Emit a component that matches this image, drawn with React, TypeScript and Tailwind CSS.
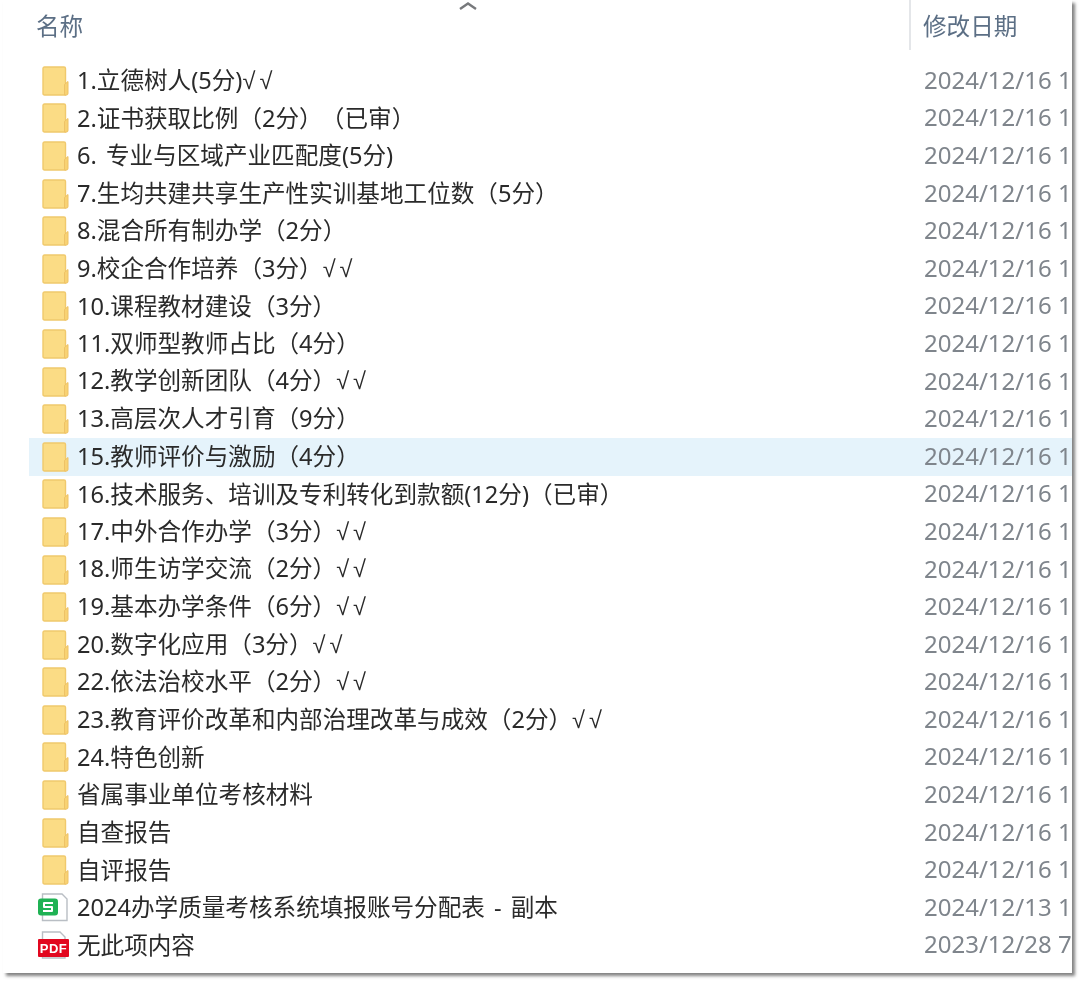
const folders = [
  { name: '1.立德树人(5分)', ticks: true },
  { name: '2.证书获取比例（2分）', note: '（已审）' },
  { name: '6. 专业与区域产业匹配度(5分)' },
  { name: '7.生均共建共享生产性实训基地工位数（5分）' },
  { name: '8.混合所有制办学（2分）' },
  { name: '9.校企合作培养（3分）', ticks: true },
  { name: '10.课程教材建设（3分）' },
  { name: '11.双师型教师占比（4分）' },
  { name: '12.教学创新团队（4分）', ticks: true },
  { name: '13.高层次人才引育（9分）' },
  { name: '15.教师评价与激励（4分）', active: true },
  { name: '16.技术服务、培训及专利转化到款额(12分)（已审）' },
  { name: '17.中外合作办学（3分）', ticks: true },
  { name: '18.师生访学交流（2分）', ticks: true },
  { name: '19.基本办学条件（6分）', ticks: true },
  { name: '20.数字化应用（3分）', ticks: true },
  { name: '22.依法治校水平（2分）', ticks: true },
  { name: '23.教育评价改革和内部治理改革与成效（2分）', ticks: true },
  { name: '24.特色创新' },
  { name: '省属事业单位考核材料' },
  { name: '自查报告' },
  { name: '自评报告' },
];

function FolderIcon() {
  return (
    <svg width="27" height="30" viewBox="0 0 27 30" className="shrink-0">
      <path d="M1 2.5 Q1 1 2.5 1 H22 Q23.5 1 23.5 2.5 V29 H2.5 Q1 29 1 27.5 Z" fill="#fbdc85" stroke="#f0c96c" strokeWidth="1.4" />
      <path d="M23 18 L26 15.5 V27.5 Q26 29 24.5 29 H22.5 V18.5 Z" fill="#f8d273" stroke="#eec266" strokeWidth="1" />
    </svg>
  );
}

function SheetIcon() {
  return (
    <svg width="32" height="30" viewBox="0 0 32 30" className="shrink-0">
      <path d="M5.5 1 H25 L30 6 V27.5 H5.5 Z" fill="#fff" stroke="#b9bec4" strokeWidth="1.4" />
      <rect x="1" y="5.5" width="20" height="17" rx="3" fill="#1fb254" />
      <path d="M16 10 H7 V14 H15 V18 H6" fill="none" stroke="#fff" strokeWidth="2" strokeLinejoin="round" />
    </svg>
  );
}

function PdfIcon() {
  return (
    <svg width="32" height="30" viewBox="0 0 32 30" className="shrink-0">
      <path d="M5.5 2 H23 L28 7 V28 H5.5 Z" fill="#fff" stroke="#b9bec4" strokeWidth="1.4" />
      <rect x="1" y="9" width="31" height="18" rx="1" fill="#e2071f" />
      <text x="16.5" y="22.5" textAnchor="middle" fill="#fff" fontSize="13" fontWeight="700" fontFamily="Liberation Sans, sans-serif" letterSpacing="0.5">PDF</text>
    </svg>
  );
}

function Row({ icon, name, date, active, wide, ticks, note }: { icon: React.ReactNode; name: string; date: string; active?: boolean; wide?: boolean; ticks?: boolean; note?: string }) {
  return (
    <div className={`flex h-[37.6px] items-center ${active ? 'bg-[#e5f3fb]' : ''}`}>
      <div className={`flex w-[882px] items-center gap-[8px] ${wide ? 'pl-[8px]' : 'pl-[13px]'}`}>
        {icon}
        <span className="whitespace-nowrap text-[#2a2a2a] [word-spacing:3px]">
          {name}
          {note && <span className="ml-[10px]">{note}</span>}
          {ticks && <span className="font-['Liberation_Sans'] tracking-[4px]">√√</span>}
        </span>
      </div>
      <div className="overflow-hidden whitespace-nowrap pb-[2px] pl-[13px] text-[24px] text-[#7f858c]">{date}</div>
    </div>
  );
}

export default function App() {
  return (
    <div
      className="h-[983px] w-[1080px] overflow-hidden bg-white pl-[3px] text-[23.6px] blur-[0.45px]"
      style={{ fontFamily: '"Noto Sans", "Noto Sans CJK SC", sans-serif' }}
    >
      <div className="relative flex h-[973px] w-[1069px] flex-col overflow-hidden bg-white shadow-[3px_3px_3px_rgba(90,90,90,0.75)]">
        <svg width="20" height="10" viewBox="0 0 20 10" className="absolute left-[455px] top-[1px]">
          <path d="M2 8 L10 2.5 L18 8" fill="none" stroke="#77797c" strokeWidth="2.4" />
        </svg>
        <div className="flex h-[50px] shrink-0 text-[#5c6f85]">
          <div className="w-[906px] pl-[33px] pt-[11px] leading-[30px]">名称</div>
          <div className="flex-1 border-l-2 border-[#e4e6e9] pl-[12px] pt-[11px] leading-[30px]">修改日期</div>
        </div>
        <div className="ml-[26px] mt-[12px] flex flex-col">
          {folders.map(f => (
            <Row key={f.name} icon={<FolderIcon />} name={f.name} date="2024/12/16 1" active={f.active} ticks={f.ticks} note={f.note} />
          ))}
          <Row wide icon={<SheetIcon />} name="2024办学质量考核系统填报账号分配表 - 副本" date="2024/12/13 1" />
          <Row wide icon={<PdfIcon />} name="无此项内容" date="2023/12/28 7" />
        </div>
      </div>
    </div>
  );
}
